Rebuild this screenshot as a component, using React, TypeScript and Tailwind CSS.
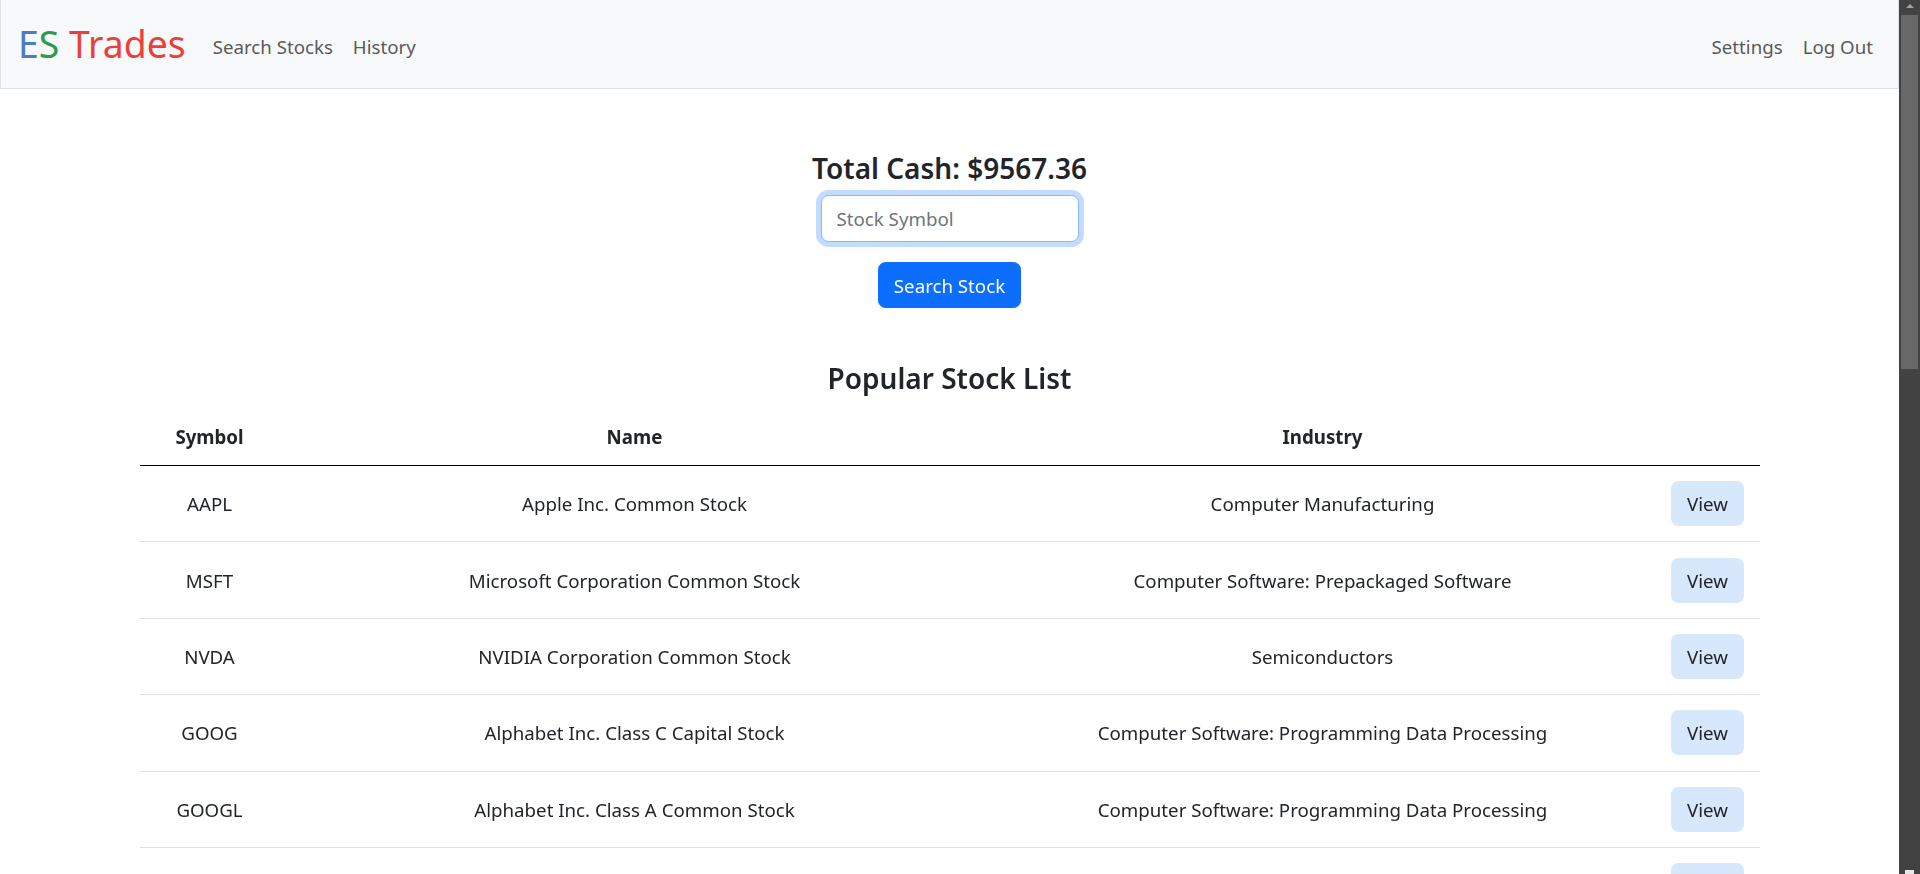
import React from 'react';

const STOCKS = [
  { symbol: 'AAPL', name: 'Apple Inc. Common Stock', industry: 'Computer Manufacturing' },
  { symbol: 'MSFT', name: 'Microsoft Corporation Common Stock', industry: 'Computer Software: Prepackaged Software' },
  { symbol: 'NVDA', name: 'NVIDIA Corporation Common Stock', industry: 'Semiconductors' },
  { symbol: 'GOOG', name: 'Alphabet Inc. Class C Capital Stock', industry: 'Computer Software: Programming Data Processing' },
  { symbol: 'GOOGL', name: 'Alphabet Inc. Class A Common Stock', industry: 'Computer Software: Programming Data Processing' },
  { symbol: 'AMZN', name: 'Amazon.com, Inc. Common Stock', industry: 'Catalog/Specialty Distribution' },
  { symbol: 'META', name: 'Meta Platforms, Inc. Class A Common Stock', industry: 'Computer Software: Programming Data Processing' },
];

const App: React.FC = () => {
  return (
    <div className="flex h-screen overflow-hidden bg-white font-['Noto_Sans',sans-serif] text-[18.7px] text-[#212529]">
      <div className="min-w-0 flex-1">
        {/* Navbar */}
        <nav className="flex h-[89px] items-center border-x border-b border-[#dee2e6] bg-[#f8f9fa] pl-[17px] pr-[15px]">
          <a href="#" className="text-[37.4px] leading-[60px]">
            <span className="text-[#4a7dc2]">E</span>
            <span className="text-[#2e9b4b]">S</span>
            <span className="text-[#ec3f3a]"> Trades</span>
          </a>
          <div className="ml-[17px] flex pt-[5px] text-[#595959]">
            <a href="#" className="px-[10px] leading-[30px]">Search Stocks</a>
            <a href="#" className="px-[10px] leading-[30px]">History</a>
          </div>
          <div className="ml-auto flex pt-[5px] text-[#595959]">
            <a href="#" className="px-[10px] leading-[30px]">Settings</a>
            <a href="#" className="px-[10px] leading-[30px]">Log Out</a>
          </div>
        </nav>

        <main className="mx-auto w-[1650px] px-[15px] text-center">
          <h4 className="mt-[61px] text-[28px] font-semibold leading-[36px]">Total Cash: $9567.36</h4>
          <input
            autoFocus
            type="text"
            placeholder="Stock Symbol"
            className="mx-auto mt-[9px] block h-[47px] w-[258px] rounded-[7.5px] border border-[#86b7fe] bg-white px-[15px] text-[18.7px] leading-[30px] text-[#212529] shadow-[0_0_0_5px_rgba(13,110,253,0.25)] outline-none placeholder:text-[#6c757d]"
          />
          <button className="mx-auto mt-[20px] block h-[46px] w-[143px] rounded-[7.5px] border border-[#0d6efd] bg-[#0d6efd] pt-[2px] text-[18.7px] leading-[30px] text-white">
            Search Stock
          </button>

          <h4 className="mt-[52px] text-[28px] font-semibold leading-[36px]">Popular Stock List</h4>

          <div className="mt-[13px]">
            <div className="grid h-[57px] grid-cols-[140px_710px_666px_104px] items-center border-b border-black font-bold">
              <div>Symbol</div>
              <div>Name</div>
              <div>Industry</div>
              <div></div>
            </div>
            {STOCKS.map((s) => (
              <div
                key={s.symbol}
                className="grid h-[76.4px] grid-cols-[140px_710px_666px_104px] items-center border-b border-[#dee2e6]"
              >
                <div className="pt-[1px]">{s.symbol}</div>
                <div className="pt-[1px]">{s.name}</div>
                <div className="pt-[1px]">{s.industry}</div>
                <div>
                  <button className="mx-auto block h-[45px] w-[73px] rounded-[7.5px] bg-[#d7e7fc] pt-[1px] text-[18.7px] leading-[30px] text-[#212529]">
                    View
                  </button>
                </div>
              </div>
            ))}
          </div>
        </main>
      </div>

      {/* Scrollbar */}
      <div className="flex w-[21px] shrink-0 flex-col bg-[#424242]">
        <div className="flex h-[15px] items-start justify-center pt-[4px]">
          <div className="h-0 w-0 border-x-[4.5px] border-b-[4px] border-x-transparent border-b-[#a3a3a3]"></div>
        </div>
        <div className="mx-[2px] h-[354px] bg-[#686868]"></div>
        <div className="flex-1"></div>
        <div className="flex h-[6px] items-end justify-center">
          <div className="h-[4px] w-[9px] bg-[#e8e8e8]"></div>
        </div>
      </div>
    </div>
  );
};

export default App;
